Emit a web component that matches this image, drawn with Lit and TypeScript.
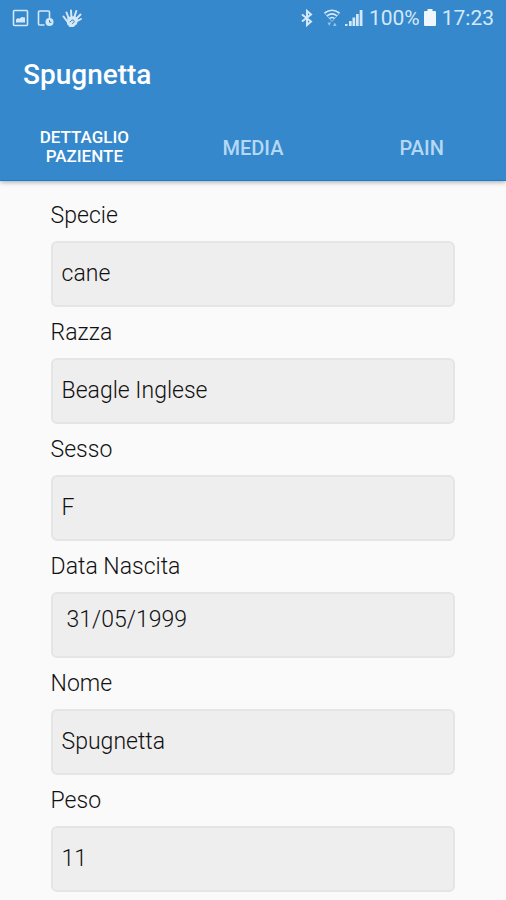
import { LitElement, html, css } from "lit";
import { customElement, state } from "lit/decorators.js";
import { classMap } from "lit/directives/class-map.js";

interface Field {
  id: string;
  label: string;
  value: string;
  date?: boolean;
}

const FIELDS: Field[] = [
  { id: "specie", label: "Specie", value: "cane" },
  { id: "razza", label: "Razza", value: "Beagle Inglese" },
  { id: "sesso", label: "Sesso", value: "F" },
  { id: "nascita", label: "Data Nascita", value: "31/05/1999", date: true },
  { id: "nome", label: "Nome", value: "Spugnetta" },
  { id: "peso", label: "Peso", value: "11" },
];

const TABS = ["Dettaglio Paziente", "Media", "Pain"];

@customElement("status-bar")
class StatusBar extends LitElement {
  static styles = css`
    :host {
      display: flex;
      align-items: center;
      justify-content: space-between;
      height: 36px;
      padding: 0 12px;
      color: #d3e8f8;
      font-size: 21px;
      line-height: 36px;
    }
    .group {
      display: flex;
      align-items: center;
    }
    .left {
      gap: 8px;
    }
    .bluetooth {
      margin-right: 9px;
    }
    .signal {
      margin: 0 6px 0 4px;
    }
    .battery {
      margin: 0 6px 0 4px;
    }
    svg {
      display: block;
      flex: none;
    }
  `;

  render() {
    return html`
      <div class="group left">
        <svg width="17" height="18" viewBox="0 0 17 18" fill="none" stroke="currentColor">
          <rect x="1.500" y="1.500" width="14" height="15" rx="1" stroke-width="1.600" />
          <path d="M4 13.500V10.500l2-1.500 1.500.7 2-1.700 3.500.5v5z" fill="currentColor" stroke="none" />
        </svg>
        <svg width="17" height="18" viewBox="0 0 17 18" fill="none" stroke="currentColor">
          <path d="M7.500 16H2.500a1 1 0 0 1-1-1V3a1 1 0 0 1 1-1h9a1 1 0 0 1 1 1v6" stroke-width="1.600" />
          <circle cx="12.500" cy="13" r="4" fill="currentColor" stroke="none" />
          <path d="M12.500 11v2.300h2" stroke="#3588cc" stroke-width="1" />
        </svg>
        <svg width="21" height="20" viewBox="0 0 21 20" fill="none" stroke="currentColor" stroke-linecap="round">
          <path d="M5.500 9l7.500-1 3 3-1 5-3.500 3h-4L5 16z" fill="currentColor" stroke="none" />
          <path d="M7 11L4.500 4.500M9.500 10L9 2.500M12 10l2.300-7M13.500 11.500l5-5M14.500 13.500l4.500-2.500M7.500 16.500L1.500 8.500" stroke-width="2" />
          <path d="M8 14c1-2 3-2.500 3.800-1.500s0 2.500-1.300 3" stroke="#3588cc" stroke-width="1" />
        </svg>
      </div>
      <div class="group">
        <svg class="bluetooth" width="14" height="18" viewBox="0 0 14 18" fill="none" stroke="currentColor" stroke-width="2">
          <path d="M2 5.500l9 7L7 16V2l4 3.500-9 7" />
        </svg>
        <svg width="18" height="18" viewBox="0 0 18 18" fill="none" stroke="currentColor" stroke-width="1.600">
          <path d="M1.500 4Q9-1.500 16.500 4M4 6.800q5-3.800 10 0M6.500 9.500q2.500-2 5 0" />
          <path d="M1.500 4L9 12.500 16.500 4" stroke-width="1" opacity=".6" />
          <path d="M4.500 13.500h3.600L6.300 17zM10 17h3.600l-1.800-3.500z" fill="currentColor" stroke="none" opacity=".6" />
        </svg>
        <svg class="signal" width="18" height="18" viewBox="0 0 18 18" fill="currentColor">
          <path d="M0 15h2.500v2H0zM4 12h2.700v5H4zM7.500 8.500h2.700V17H7.500zM11 5h2.700v12H11zM14.700 1h2.800v16h-2.800z" />
        </svg>
        <span>100%</span>
        <svg class="battery" width="12" height="18" viewBox="0 0 12 18" fill="#eef7fe">
          <path d="M3.500 0h5v2H11a1 1 0 0 1 1 1v13a1 1 0 0 1-1 1H1a1 1 0 0 1-1-1V3a1 1 0 0 1 1-1h2.500z" />
        </svg>
        <time>17:23</time>
      </div>
    `;
  }
}

@customElement("app-root")
class AppRoot extends LitElement {
  @state() private active = 0;

  static styles = css`
    :host {
      display: block;
      min-height: 100vh;
      background: #fafafa;
      color: #111111;
      font-family: Roboto, "Liberation Sans", sans-serif;
    }
    * {
      box-sizing: border-box;
    }
    header {
      background: #3588cc;
      border-bottom: 1px solid #1d7ac4;
      box-shadow: 0 1px 5px rgba(0, 0, 0, 0.35);
    }
    h1 {
      margin: 0;
      padding: 0 23px;
      color: #ffffff;
      font-size: 28px;
      font-weight: 500;
      line-height: 78px;
    }
    nav {
      display: grid;
      grid-template-columns: repeat(3, 1fr);
      height: 66px;
    }
    .tab {
      display: flex;
      align-items: center;
      justify-content: center;
      border: 0;
      padding: 2px 36px 0;
      background: none;
      color: #b5d8f4;
      font-family: inherit;
      font-size: 20px;
      font-weight: 500;
      line-height: 19px;
      text-transform: uppercase;
    }
    .tab.active {
      padding-top: 0;
      color: #ffffff;
      font-size: 17px;
    }
    form {
      padding: 9px 10%;
    }
    label {
      display: block;
      padding: 12px 0;
      font-size: 23px;
      font-weight: 300;
      line-height: 27px;
    }
    .box {
      display: block;
      width: 100%;
      height: 66px;
      margin: 0;
      border: 2px solid #e5e5e5;
      border-radius: 6px;
      padding: 0 9px 2px;
      background: #eeeeee;
      color: inherit;
      font-family: inherit;
      font-size: 23px;
      font-weight: 300;
      outline: none;
    }
    .box.date {
      padding: 0 14px 12px;
    }
  `;

  render() {
    return html`
      <header>
        <status-bar></status-bar>
        <h1>Spugnetta</h1>
        <nav>
          ${TABS.map(
            (name, i) => html`<button
              type="button"
              class=${classMap({ tab: true, active: i === this.active })}
              @click=${() => (this.active = i)}
            >${name}</button>`
          )}
        </nav>
      </header>
      <form>
        ${FIELDS.map(
          (f) => html`
            <label for=${f.id}>${f.label}</label>
            <input
              id=${f.id}
              class=${classMap({ box: true, date: !!f.date })}
              type="text"
              readonly
              .value=${f.value}
            />
          `
        )}
      </form>
    `;
  }
}
